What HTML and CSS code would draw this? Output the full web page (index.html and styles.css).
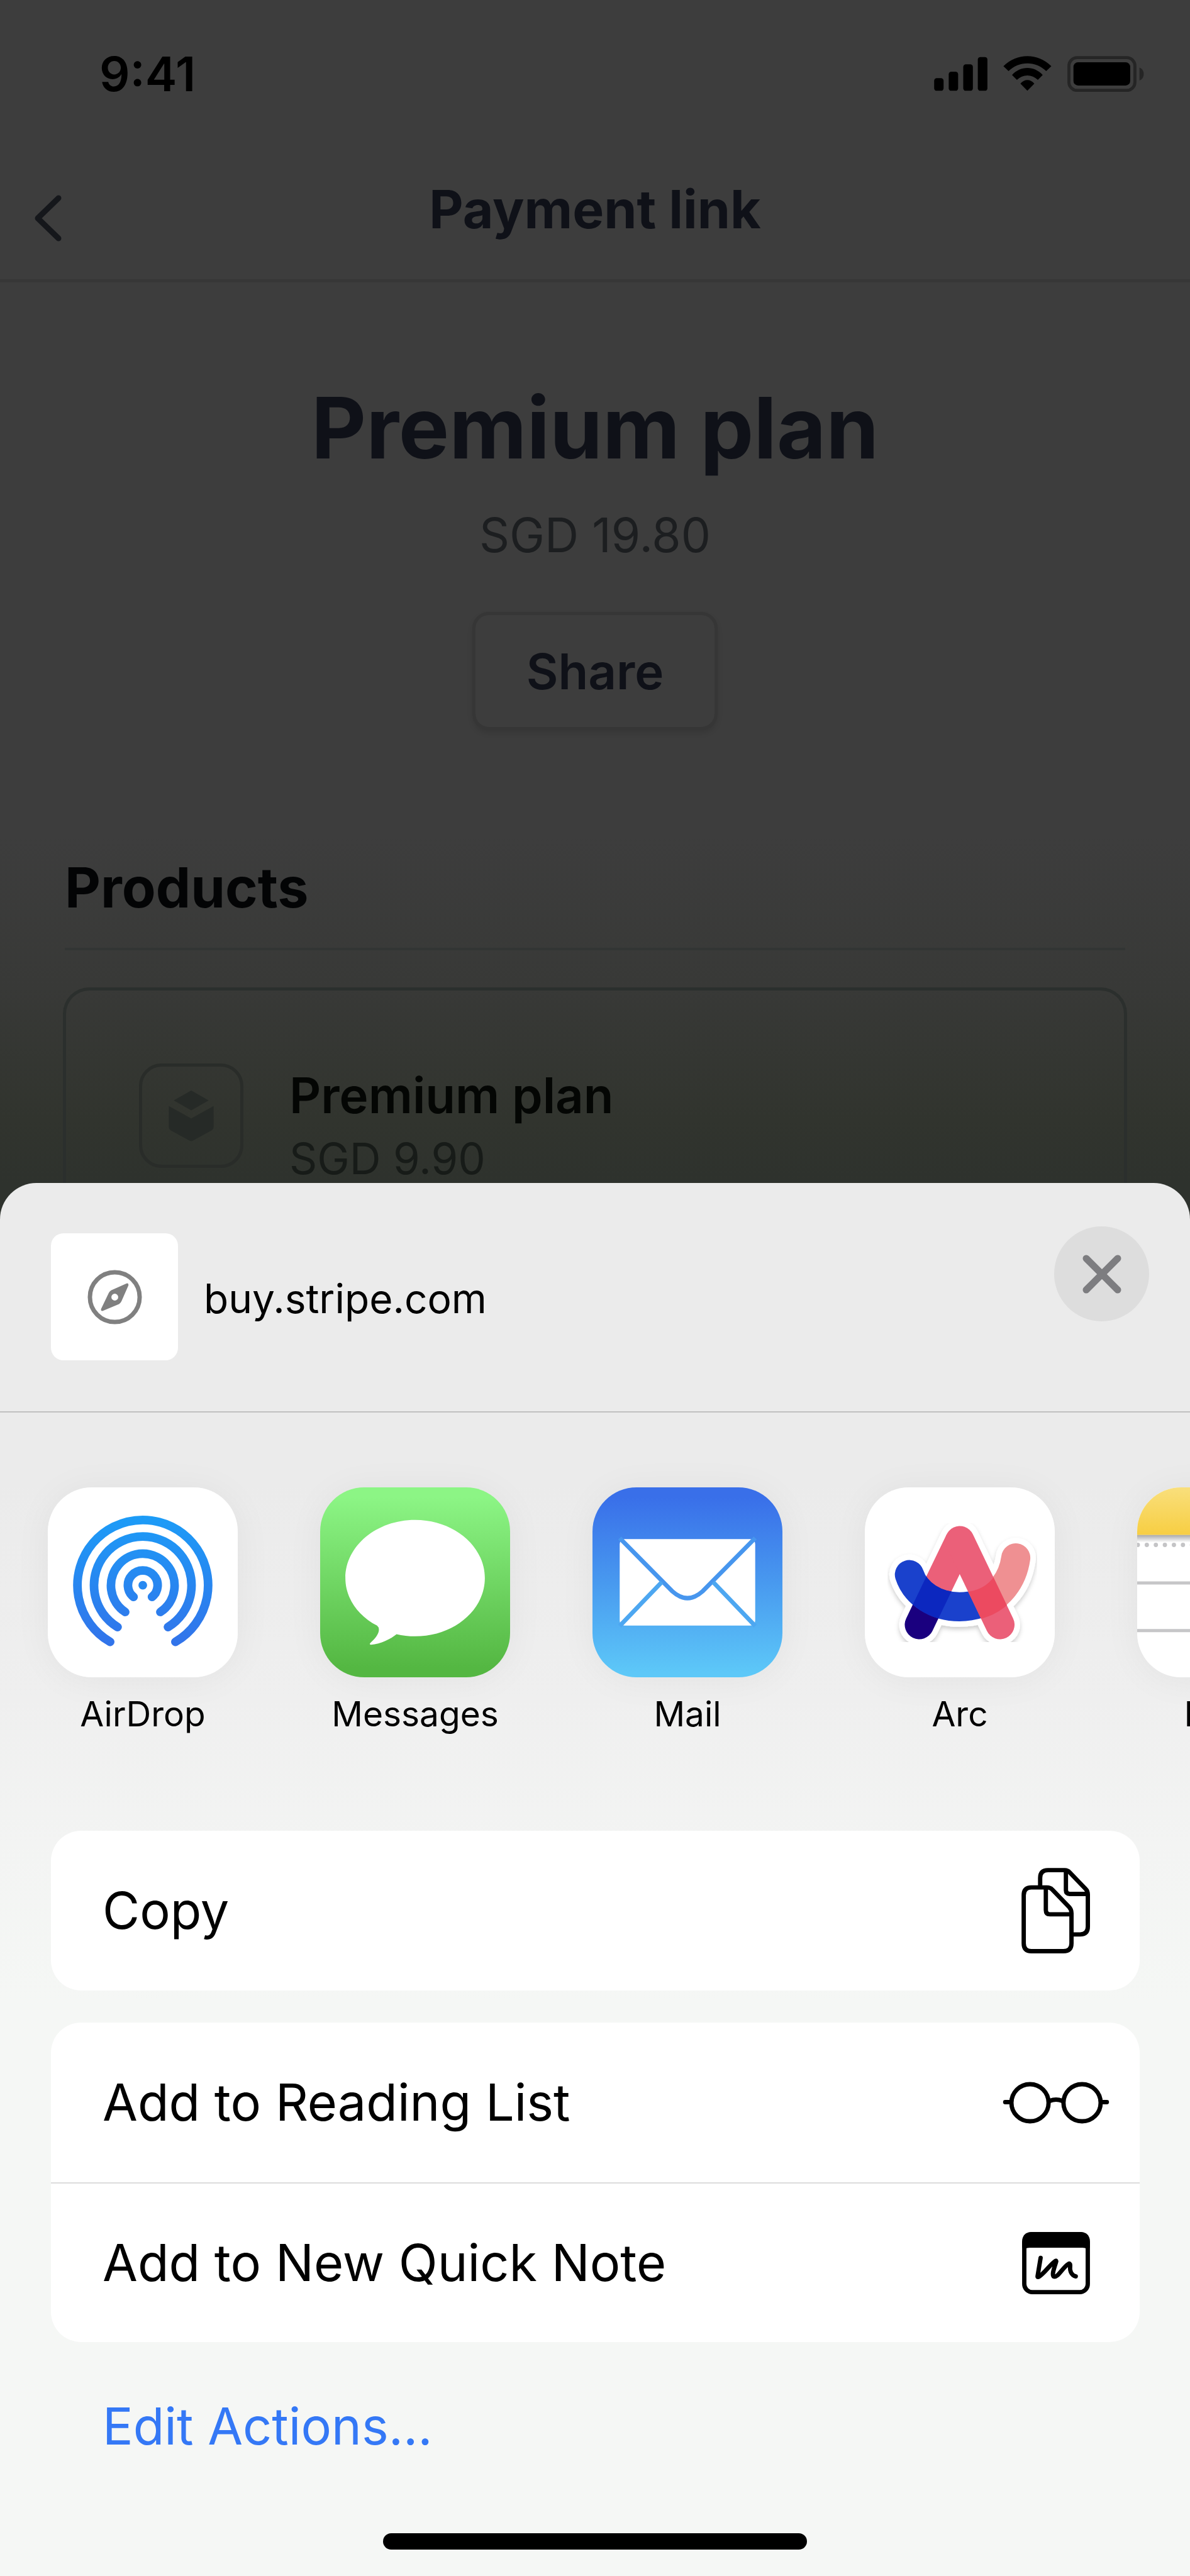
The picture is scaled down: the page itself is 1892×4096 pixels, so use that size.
FILE: index.html
```html
<!DOCTYPE html>
<html lang="en">
<head>
<meta charset="utf-8">
<meta name="viewport" content="width=device-width, initial-scale=1">
<title>Payment link</title>
<link rel="stylesheet" href="styles.css">
</head>
<body>
<div class="screen">
  <div class="behind">
    <div class="status">
      <span class="time">9:41</span>
      <svg class="status-icons" viewBox="78 87 1024 175" aria-hidden="true">
        <rect x="78" y="195" width="46" height="62" rx="13"/>
        <rect x="149" y="164" width="46" height="93" rx="13"/>
        <rect x="220" y="128" width="47" height="129" rx="13"/>
        <rect x="291" y="92" width="47" height="165" rx="13"/>
        <path d="M416 137C482 71 584 71 650 137L625 161C573 110 493 110 441 161Z"/>
        <path d="M458 180C500 134 566 134 608 180L584 204C554 175 512 175 482 204Z"/>
        <path d="M499 222C518 199 548 199 567 222L533 257Z"/>
        <rect x="736" y="95" width="322" height="160" rx="40" fill="none" stroke="#252525" stroke-width="15"/>
        <rect x="758" y="118" width="277" height="113" rx="22"/>
        <path d="M1080 144C1108 153 1108 198 1080 207Z" fill="#252525"/>
      </svg>
    </div>
    <header class="nav">
      <button class="back" type="button" aria-label="Back">
        <svg viewBox="0 0 44 74" aria-hidden="true"><path d="M39 5L6 37L39 69"/></svg>
      </button>
      <h1 class="nav-title">Payment link</h1>
    </header>
    <main>
      <section class="hero">
        <h2 class="hero-title">Premium plan</h2>
        <p class="hero-price">SGD 19.80</p>
        <button class="share" type="button">Share</button>
      </section>
      <section class="products">
        <h3 class="products-title">Products</h3>
        <article class="product">
          <div class="product-icon">
            <svg viewBox="0 0 72 82" aria-hidden="true"><path d="M36 0L64 16L36 32L8 16ZM0 25L36 45L72 25V59Q72 62 69 64L38 81Q36 82 34 81L3 64Q0 62 0 59Z"/></svg>
          </div>
          <div>
            <p class="product-name">Premium plan</p>
            <p class="product-price">SGD 9.90</p>
          </div>
        </article>
      </section>
    </main>
  </div>

  <div class="sheet" role="dialog" aria-label="Share">
    <div class="sheet-head">
      <div class="thumb">
        <svg viewBox="0 0 88 88" aria-hidden="true">
          <circle cx="44" cy="44" r="40" fill="none" stroke="#808080" stroke-width="7"/>
          <path fill="#808080" fill-rule="evenodd" d="M63 22Q66 21 66 25L55 50Q54 53 51 55L25 66Q21 67 22 63L34 38Q35 35 38 33ZM44 38.500A5.500 5.500 0 1 0 44 49.500A5.500 5.500 0 1 0 44 38.500Z"/>
        </svg>
      </div>
      <span class="sheet-url">buy.stripe.com</span>
      <button class="close" type="button" aria-label="Close">
        <svg viewBox="0 0 62 62" aria-hidden="true"><path d="M6 6L56 56M56 6L6 56"/></svg>
      </button>
    </div>

    <div class="apps">
      <button class="app" type="button">
        <svg class="tile" viewBox="0 0 307 307" aria-hidden="true">
          <defs><linearGradient id="air" gradientUnits="userSpaceOnUse" x1="0" y1="46" x2="0" y2="256"><stop offset="0" stop-color="#1c9cf7"/><stop offset="1" stop-color="#3273ea"/></linearGradient></defs>
          <rect width="307" height="307" fill="#fff"/>
          <g fill="none" stroke="url(#air)" stroke-width="14" stroke-linecap="round">
            <path d="M100.700 249.700A105.600 105.600 0 1 1 206.300 249.700"/>
            <path d="M112.700 225.700A78.800 78.800 0 1 1 194.300 225.700"/>
            <path d="M125 201.400A51.400 51.400 0 1 1 182 201.400"/>
            <path d="M138.500 177A24 24 0 1 1 168.500 177"/>
          </g>
          <circle cx="153.500" cy="158.300" r="7" fill="#2789f1"/>
        </svg>
        <span>AirDrop</span>
      </button>
      <button class="app" type="button">
        <svg class="tile" viewBox="0 0 307 307" aria-hidden="true">
          <defs><linearGradient id="msg" x1="0" y1="0" x2="0" y2="1"><stop offset="0.050" stop-color="#8cf585"/><stop offset="0.950" stop-color="#54b742"/></linearGradient></defs>
          <rect width="307" height="307" fill="url(#msg)"/>
          <path fill="#fff" d="M153.500 52.700C215.700 52.700 266.200 94.800 266.200 146.700S215.700 240.700 153.500 240.700C143 240.700 133 239.700 123.500 237.300C114 245 98 253 82 254.500Q79 254 81 251.500C90 244 95 236 95 230Q95 226 92 223.500C60 207 40.800 178 40.800 146.700C40.800 94.800 91.300 52.700 153.500 52.700Z"/>
        </svg>
        <span>Messages</span>
      </button>
      <button class="app" type="button">
        <svg class="tile" viewBox="0 0 307 307" aria-hidden="true">
          <defs><linearGradient id="mail" x1="0" y1="0" x2="0" y2="1"><stop offset="0.050" stop-color="#396fe9"/><stop offset="0.500" stop-color="#4899ef"/><stop offset="0.980" stop-color="#5dc8f8"/></linearGradient></defs>
          <rect width="307" height="307" fill="url(#mail)"/>
          <rect x="44" y="83.500" width="219" height="140" rx="8" fill="#fff"/>
          <g fill="none" stroke="#4796ee" stroke-width="7">
            <path d="M44 82L129 168Q153.500 190 178 168L263 82"/>
            <path d="M112 153L44 224M195 153L263 224" stroke="#4da7f1"/>
          </g>
        </svg>
        <span>Mail</span>
      </button>
      <button class="app" type="button">
        <svg class="tile" viewBox="0 0 307 307" aria-hidden="true">
          <defs>
            <filter id="lift" x="-20%" y="-20%" width="140%" height="140%"><feDropShadow dx="0" dy="4" stdDeviation="4" flood-opacity="0.200"/></filter>
            <mask id="legL" maskUnits="userSpaceOnUse" x="0" y="0" width="307" height="307"><path d="M153.500 86L88 222" stroke="#fff" stroke-width="47" stroke-linecap="round"/></mask>
            <mask id="legR" maskUnits="userSpaceOnUse" x="0" y="0" width="307" height="307"><path d="M153.500 86L218.500 222" stroke="#fff" stroke-width="47" stroke-linecap="round"/></mask>
          </defs>
          <rect width="307" height="307" fill="#fff"/>
          <g fill="none" stroke-width="47" stroke-linecap="round" stroke-linejoin="round">
            <path filter="url(#lift)" stroke="#fff" stroke-width="65" d="M88 222L153.500 86L218.500 222M72 141C82 172 115 193 153 193C200 193 237 165 244 114"/>
            <path stroke="#1a007f" d="M100 197L88 222"/>
            <path stroke="#eb6079" stroke-linecap="butt" d="M110 176L153.500 86"/>
            <path stroke="#ef9092" d="M185 188C217 178 239 150 244 114"/>
            <path stroke="#1a41cc" d="M72 141C82 172 115 193 153 193Q170 193 185 188"/>
            <path stroke="#0c27bf" mask="url(#legL)" d="M72 141C82 172 115 193 153 193"/>
            <path stroke="#eb6079" d="M153.500 86L218.500 222"/>
            <path stroke="#ec4a60" mask="url(#legR)" stroke-linecap="butt" d="M160 193C203 191 237 165 244 114"/>
          </g>
        </svg>
        <span>Arc</span>
      </button>
      <button class="app" type="button">
        <svg class="tile" viewBox="0 0 307 307" aria-hidden="true">
          <defs>
            <linearGradient id="pad" x1="0" y1="0" x2="0" y2="1"><stop offset="0" stop-color="#f9df7c"/><stop offset="1" stop-color="#f7ce42"/></linearGradient>
            <linearGradient id="fold" x1="0" y1="0" x2="0" y2="1"><stop offset="0" stop-color="#a9a9a9"/><stop offset="1" stop-color="#fff"/></linearGradient>
          </defs>
          <rect width="307" height="307" fill="#fff"/>
          <rect width="307" height="77" fill="url(#pad)"/>
          <rect y="77" width="307" height="12" fill="url(#fold)"/>
          <path d="M1 93H307" stroke="#c4c4c6" stroke-width="7" stroke-linecap="round" stroke-dasharray="0 14.600"/>
          <path d="M0 154.500H307M0 231.500H307" stroke="#c6c6c8" stroke-width="5"/>
        </svg>
        <span>Notes</span>
      </button>
    </div>

    <div class="actions">
      <div class="group">
        <button class="action" type="button">
          <span>Copy</span>
          <svg class="icon-copy" viewBox="0 0 112 139" aria-hidden="true">
            <path d="M30.300 30V16Q30.300 3.500 43 3.500H70Q75 3.500 78 7L104 34Q107.500 37.500 107.500 43V95Q107.500 107.500 95 107.500H84"/>
            <path d="M72 5V36Q72 42 78 42H106"/>
            <path d="M16 31.500H41Q47 31.500 50 35L77 63Q81 67 81 73V122Q81 134.700 68 134.700H16Q3.700 134.700 3.700 122V44Q3.700 31.500 16 31.500Z"/>
            <path d="M39.500 33V68Q39.500 75 46 75H80"/>
          </svg>
        </button>
      </div>
      <div class="group">
        <button class="action" type="button">
          <span>Add to Reading List</span>
          <svg class="icon-glasses" viewBox="0 0 172 68" aria-hidden="true">
            <circle cx="44" cy="34" r="30"/><circle cx="128" cy="34" r="30"/>
            <path d="M4 33H13M159 33H168M76 31Q86 27 96 31"/>
          </svg>
        </button>
        <button class="action" type="button">
          <span>Add to New Quick Note</span>
          <svg class="icon-note" viewBox="0 0 110 101" aria-hidden="true">
            <rect x="3.500" y="3.500" width="103" height="94" rx="13"/>
            <path d="M3.500 24V16Q3.500 3.500 16 3.500H94Q106.500 3.500 106.500 16V24Q103 22 98 22H12Q7 22 3.500 24Z" fill="#000"/>
            <path d="M30 42L25 72Q25 74 28 72C38 65 45 53 54 47Q56 46 55 49C52 59 48 68 51 72C57 76 66 57 75 52Q78 50 78 54C77 62 79 70 87 72"/>
          </svg>
        </button>
      </div>
      <button class="edit" type="button">Edit Actions...</button>
    </div>
    <div class="home-bar"></div>
  </div>
</div>
</body>
</html>
```
FILE: styles.css
```css
* { box-sizing: border-box; margin: 0; padding: 0; }

body {
  font-family: Inter, "Liberation Sans", sans-serif;
  background: #3d3d3d;
  color: #000;
}

button {
  font: inherit;
  color: inherit;
  background: none;
  border: 0;
  cursor: pointer;
}

svg { display: block; flex: none; }

.screen {
  min-height: 100vh;
  display: flex;
  flex-direction: column;
  overflow: hidden;
}

/* Dimmed page under the share sheet */
.behind {
  padding-bottom: 48px;
  background: linear-gradient(#3d3d3d 0 1330px, #383937 1570px, #31342e 1780px, #2e322d 1880px);
}

.status {
  height: 222px;
  padding: 12px 72px 0 158px;
  display: flex;
  align-items: center;
  justify-content: space-between;
}

.time { font-size: 76px; font-weight: 600; }

.status-icons { width: 336px; height: 57px; }

.nav {
  height: 227px;
  padding: 0 54px;
  display: grid;
  grid-template-columns: 120px 1fr 120px;
  align-items: center;
  border-bottom: 5px solid #373737;
  color: #0f1118;
}

.back { padding-top: 28px; justify-self: start; }

.back svg {
  width: 44px;
  height: 74px;
  fill: none;
  stroke: #15171b;
  stroke-width: 9;
  stroke-linecap: round;
  stroke-linejoin: round;
}

.nav-title {
  text-align: center;
  font-size: 84px;
  font-weight: 700;
  line-height: 100px;
}

.hero {
  padding-top: 151px;
  display: flex;
  flex-direction: column;
  align-items: center;
  color: #0f1118;
}

.hero-title { font-size: 135px; font-weight: 700; line-height: 160px; }

.hero-price {
  margin-top: 43px;
  font-size: 75px;
  line-height: 96px;
  color: #1c1e20;
}

.share {
  margin-top: 74px;
  height: 188px;
  padding: 0 81px;
  border: 5px solid #363636;
  border-radius: 26px;
  box-shadow: 0 5px 8px rgba(0, 0, 0, 0.1);
  font-size: 78px;
  font-weight: 600;
}

.products { margin-top: 200px; padding: 0 100px; }

.products-title {
  margin: 0 3px;
  padding-bottom: 46px;
  border-bottom: 4px solid #323534;
  font-size: 88px;
  font-weight: 700;
  line-height: 100px;
  color: #030405;
}

.product {
  margin-top: 59px;
  margin-bottom: -48px;
  padding: 116px 116px 48px;
  display: flex;
  gap: 73px;
  border: 5px solid #2b2f2d;
  border-bottom: 0;
  border-radius: 42px 42px 0 0;
}

.product-icon {
  width: 166px;
  height: 166px;
  display: grid;
  place-items: center;
  border: 5px solid #292c29;
  border-radius: 36px;
}

.product-icon svg { width: 72px; height: 81px; fill: #262a27; }

.product-name { font-size: 78px; font-weight: 600; line-height: 101px; color: #040604; }

.product-price { font-size: 69px; line-height: 101px; color: #171b18; }

/* Share sheet */
.sheet {
  position: relative;
  flex: 1;
  margin-top: -60px;
  border-radius: 58px 58px 0 0;
  overflow: hidden;
  background: linear-gradient(#ebebeb 0 480px, #efefef 820px, #f3f4f3 1050px, #f5f7f5 1300px);
}

.sheet-head {
  padding: 69px 65px 81px 81px;
  display: flex;
  align-items: center;
  border-bottom: 2px solid #c0c0c0;
}

.thumb {
  width: 202px;
  height: 202px;
  margin-top: 11px;
  display: grid;
  place-items: center;
  background: #fff;
  border-radius: 20px;
}

.thumb svg { width: 87px; height: 87px; }

.sheet-url { margin: 16px auto 0 41px; font-size: 64px; line-height: 80px; }

.close {
  width: 151px;
  height: 151px;
  align-self: flex-start;
  display: grid;
  place-items: center;
  border-radius: 50%;
  background: #dddddd;
}

.close svg {
  width: 62px;
  height: 62px;
  fill: none;
  stroke: #7d7d80;
  stroke-width: 11;
  stroke-linecap: round;
}

.apps {
  display: flex;
  gap: 131px;
  padding: 119px 0 0 76px;
}

.app {
  flex: none;
  width: 302px;
  display: flex;
  flex-direction: column;
  align-items: center;
  gap: 26px;
  font-size: 55px;
  line-height: 64px;
}

.tile {
  width: 302px;
  height: 302px;
  border-radius: 70px;
  box-shadow: 0 4px 60px rgba(0, 0, 0, 0.05);
}

.actions {
  margin-top: 154px;
  padding: 0 80px 0 81px;
  display: flex;
  flex-direction: column;
  gap: 51px;
  font-size: 81px;
}

.group { background: #fff; border-radius: 48px; overflow: hidden; }

.action {
  width: 100%;
  height: 254px;
  padding: 0 48px 0 82px;
  display: flex;
  align-items: center;
  justify-content: space-between;
  text-align: left;
}

.action + .action { border-top: 2px solid #dcdcdc; }

.action svg { fill: none; stroke: #000; stroke-width: 7; stroke-linecap: round; stroke-linejoin: round; }

.action .icon-copy { width: 110px; height: 137px; margin-right: 30px; stroke-width: 7; }

.icon-glasses { width: 170px; height: 67px; }

.icon-note { width: 108px; height: 99px; margin-right: 31px; }

.edit {
  align-self: flex-start;
  padding: 31px 82px;
  line-height: 104px;
  color: #3478f6;
}

.home-bar {
  width: 674px;
  max-width: 80%;
  height: 26px;
  margin: 87px auto 39px;
  border-radius: 13px;
  background: #000;
}
```
